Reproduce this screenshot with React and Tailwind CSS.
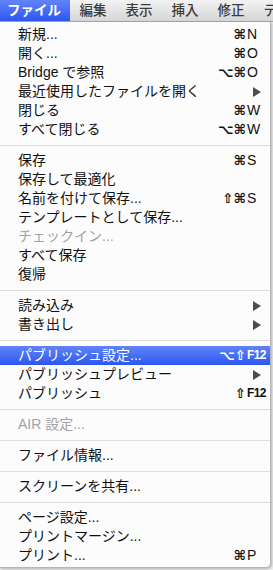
import React from "react";

const items = [
  { label: "新規...", mods: "⌘", key: "N" },
  { label: "開く...", mods: "⌘", key: "O" },
  { label: "Bridge で参照", mods: "⌥⌘", key: "O" },
  { label: "最近使用したファイルを開く", sub: true },
  { label: "閉じる", mods: "⌘", key: "W" },
  { label: "すべて閉じる", mods: "⌥⌘", key: "W" },
  "sep",
  { label: "保存", mods: "⌘", key: "S" },
  { label: "保存して最適化" },
  { label: "名前を付けて保存...", mods: "⇧⌘", key: "S" },
  { label: "テンプレートとして保存..." },
  { label: "チェックイン...", disabled: true },
  { label: "すべて保存" },
  { label: "復帰" },
  "sep",
  { label: "読み込み", sub: true },
  { label: "書き出し", sub: true },
  "sep",
  { label: "パブリッシュ設定...", mods: "⌥⇧", key: "F12", active: true },
  { label: "パブリッシュプレビュー", sub: true },
  { label: "パブリッシュ", mods: "⇧", key: "F12" },
  "sep",
  { label: "AIR 設定...", disabled: true },
  "sep",
  { label: "ファイル情報..." },
  "sep",
  { label: "スクリーンを共有..." },
  "sep",
  { label: "ページ設定..." },
  { label: "プリントマージン..." },
  { label: "プリント...", mods: "⌘", key: "P" },
];

const menus = ["編集", "表示", "挿入", "修正", "テキスト"];

const Arrow = () => (
  <svg width="8" height="10" viewBox="0 0 8 10" className="mr-[9px]">
    <polygon points="0,0 8,5 0,10" fill="#4d4d4d" />
  </svg>
);

const MenuRow = ({ item }) => {
  let rowClass = "flex items-center h-[19px] pl-[18px] text-[14px] leading-[19px] ";
  if (item.active) rowClass += "bg-gradient-to-b from-[#6283f8] to-[#2c55f1] text-white";
  else if (item.disabled) rowClass += "text-[#a3a3a3]";
  else rowClass += "text-[#111111]";

  // F12 style keys are drawn bolder and narrower than single letters
  const fkey = item.key && item.key.length > 1;

  return (
    <div className={rowClass}>
      <span className="flex-1 whitespace-nowrap">{item.label}</span>
      {item.key && (
        <div className="flex items-center">
          <span className="text-right font-['DejaVu_Sans',sans-serif] text-[13.5px] font-bold">{item.mods}</span>
          {fkey ? (
            <span className="w-[21px] ml-[1px] mr-[2px] text-[12px] font-bold tracking-[-0.6px]">{item.key}</span>
          ) : (
            <span className="w-[21px] ml-[1px] mr-[2px] text-[14px]">{item.key}</span>
          )}
        </div>
      )}
      {item.sub && <Arrow />}
    </div>
  );
};

export default function App() {
  return (
    <div className="w-[273px] h-[570px] overflow-hidden bg-[#eeeeee] font-['Liberation_Sans','Noto_Sans_CJK_JP',sans-serif]">
      {/* menu bar */}
      <div className="flex h-[22px] bg-gradient-to-b from-[#f3f3f3] to-[#d6d6d6] border-b border-[#a8a8a8] text-[13.5px] leading-[21px] whitespace-nowrap">
        <div className="pl-[7px] pr-[9px] bg-gradient-to-b from-[#6283f8] to-[#2c55f1] text-white font-bold">ファイル</div>
        {menus.map((m) => (
          <div key={m} className="px-[9.5px] text-[#3c3c3c] font-medium">
            {m}
          </div>
        ))}
      </div>

      {/* dropdown */}
      <div className="w-[271px] bg-[#fcfcfc] border-r border-b border-[#b5b5b5] rounded-br-[5px] pt-[3px] pb-[2px] shadow-[1px_1px_3px_rgba(0,0,0,0.25)]">
        {items.map((item, i) =>
          item === "sep" ? (
            <div key={i} className="h-[12px] flex items-center">
              <div className="w-full h-px bg-[#dedede]" />
            </div>
          ) : (
            <MenuRow key={i} item={item} />
          )
        )}
      </div>
    </div>
  );
}
